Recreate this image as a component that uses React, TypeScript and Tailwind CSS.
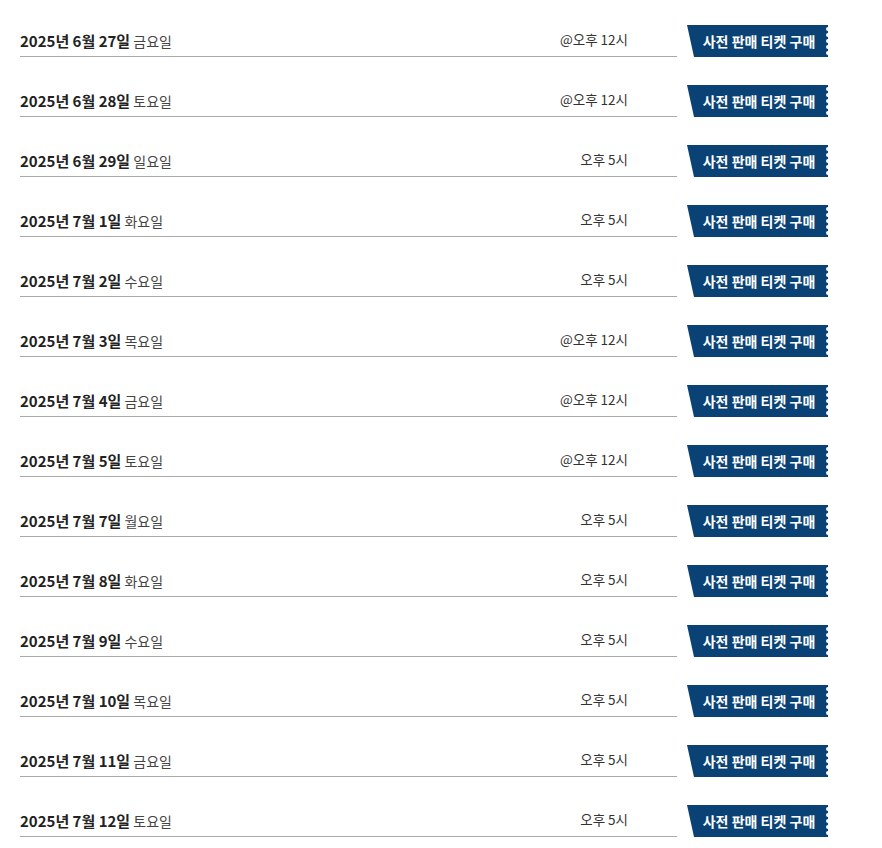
const rows = [
  { date: '2025년 6월 27일', day: '금요일', time: '@오후 12시' },
  { date: '2025년 6월 28일', day: '토요일', time: '@오후 12시' },
  { date: '2025년 6월 29일', day: '일요일', time: '오후 5시' },
  { date: '2025년 7월 1일', day: '화요일', time: '오후 5시' },
  { date: '2025년 7월 2일', day: '수요일', time: '오후 5시' },
  { date: '2025년 7월 3일', day: '목요일', time: '@오후 12시' },
  { date: '2025년 7월 4일', day: '금요일', time: '@오후 12시' },
  { date: '2025년 7월 5일', day: '토요일', time: '@오후 12시' },
  { date: '2025년 7월 7일', day: '월요일', time: '오후 5시' },
  { date: '2025년 7월 8일', day: '화요일', time: '오후 5시' },
  { date: '2025년 7월 9일', day: '수요일', time: '오후 5시' },
  { date: '2025년 7월 10일', day: '목요일', time: '오후 5시' },
  { date: '2025년 7월 11일', day: '금요일', time: '오후 5시' },
  { date: '2025년 7월 12일', day: '토요일', time: '오후 5시' },
];

function TicketButton() {
  return (
    <a href="#" className="relative flex h-[32px] w-[141px] shrink-0 items-center justify-center">
      {/* ticket shape: slanted left edge, notched right edge */}
      <svg className="absolute inset-0" width="141" height="32" viewBox="0 0 141 32">
        <polygon points="0,0 141,0 141,32 7,32" fill="#0a4275" />
        {[4, 10, 16, 22, 28].map((cy) => (
          <circle key={cy} cx="141" cy={cy} r="2" fill="#fff" />
        ))}
      </svg>
      <span className="relative pl-[3px] text-[14px] font-bold text-white">
        사전 판매 티켓 구매
      </span>
    </a>
  );
}

export default function App() {
  return (
    <div className="min-h-[848px] bg-white px-[20px] pt-[25px] font-['Noto_Sans_CJK_KR','Noto_Sans',sans-serif] text-[#222]">
      <div className="flex w-[808px] flex-col gap-[28px]">
        {rows.map((row) => (
          <div key={row.date} className="flex h-[32px] gap-[10px]">
            <div className="flex h-[32px] flex-1 items-center justify-between border-b border-[#aaa] pr-[49px]">
              <div className="pt-[1px] text-[14px]">
                <span className="text-[15px] font-bold">{row.date}</span>{' '}
                <span className="text-[#444]">{row.day}</span>
              </div>
              <div className="mb-[3px] text-[13.5px] text-[#333]">{row.time}</div>
            </div>
            <TicketButton />
          </div>
        ))}
      </div>
    </div>
  );
}
